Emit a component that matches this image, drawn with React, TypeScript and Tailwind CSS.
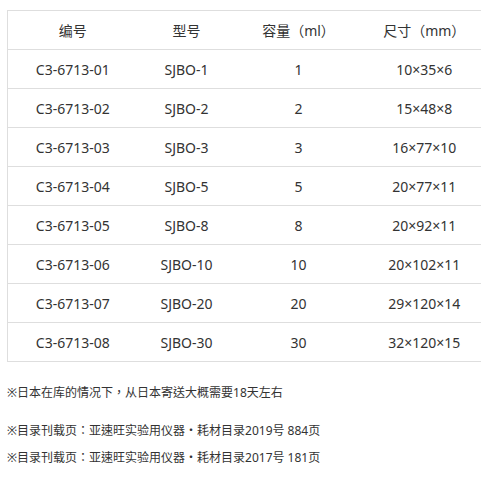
import React from "react";

const rows = [
  ["C3-6713-01", "SJBO-1", "1", "10×35×6"],
  ["C3-6713-02", "SJBO-2", "2", "15×48×8"],
  ["C3-6713-03", "SJBO-3", "3", "16×77×10"],
  ["C3-6713-04", "SJBO-5", "5", "20×77×11"],
  ["C3-6713-05", "SJBO-8", "8", "20×92×11"],
  ["C3-6713-06", "SJBO-10", "10", "20×102×11"],
  ["C3-6713-07", "SJBO-20", "20", "29×120×14"],
  ["C3-6713-08", "SJBO-30", "30", "32×120×15"],
];

export default function App() {
  return (
    <div
      className="w-[481px] h-[479px] overflow-hidden bg-white text-[#333] pl-[7px] pt-[10px]"
      style={{ fontFamily: '"Noto Sans", "Noto Sans CJK TC", sans-serif' }}
    >
      {/* Spec table */}
      <table className="w-[490px] border-collapse border border-[#dedede] text-[14px] table-fixed">
        <colgroup>
          <col className="w-[130px]" />
          <col className="w-[98px]" />
          <col className="w-[126px]" />
          <col className="w-[136px]" />
        </colgroup>
        <thead>
          <tr className="h-[39px] border-b border-[#dedede]">
            <th className="font-normal text-center">编号</th>
            <th className="font-normal text-center">型号</th>
            <th className="font-normal text-center">容量（ml）</th>
            <th className="font-normal text-center pr-[10px]">尺寸（mm）</th>
          </tr>
        </thead>
        <tbody>
          {rows.map((r) => (
            <tr key={r[0]} className="h-[39px] border-b border-[#dedede]">
              <td className="text-center">{r[0]}</td>
              <td className="text-center">{r[1]}</td>
              <td className="text-center">{r[2]}</td>
              <td className="text-center pr-[10px]">{r[3]}</td>
            </tr>
          ))}
        </tbody>
      </table>

      {/* Notes */}
      <div className="text-[12px] leading-[27px]">
        <p className="mt-[17px]">※日本在库的情况下，从日本寄送大概需要18天左右</p>
        <p className="mt-[11px]">※目录刊载页：亚速旺实验用仪器・耗材目录2019号 884页</p>
        <p>※目录刊载页：亚速旺实验用仪器・耗材目录2017号 181页</p>
      </div>
    </div>
  );
}
